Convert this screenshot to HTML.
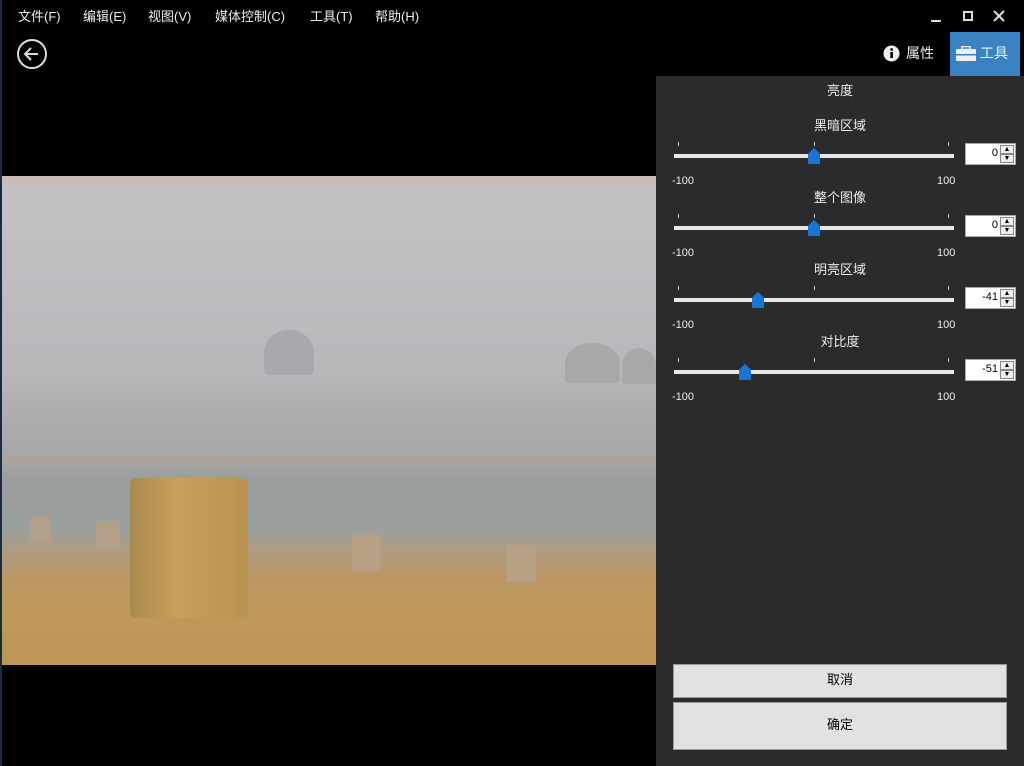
<!DOCTYPE html>
<html><head><meta charset="utf-8"><style>
*{margin:0;padding:0;box-sizing:border-box}
body{width:1024px;height:766px;background:#000;position:relative;overflow:hidden;font-family:"Liberation Sans","Noto Sans CJK SC",sans-serif;color:#fff;font-size:13px}
.a{position:absolute}
.menu span{position:absolute;top:6px;font-size:13px;color:#eee}
.panel{left:656px;top:76px;width:368px;height:690px;background:#2b2a2c}
.t{position:absolute;width:368px;text-align:center;font-size:13px;color:#eee}
.track{position:absolute;left:18px;width:280px;height:4px;background:#e8e8e8}
.tick{position:absolute;width:1px;height:4px;background:#ccc}
.thumb{position:absolute;width:12px;height:16px;background:#1a74d2;clip-path:polygon(50% 0,100% 35%,100% 100%,0 100%,0 35%)}
.num{position:absolute;font-size:11px;color:#eee}
.box{position:absolute;left:309px;width:51px;height:22px;background:#fff;border:1px solid #aaa;color:#000;font-size:11px}
.box b{position:absolute;right:17px;top:3px;font-weight:normal}
.box i{position:absolute;right:1px;width:14px;height:9px;border:1px solid #888;background:#eee;font-style:normal;font-size:7px;text-align:center;line-height:8px}
.btn{position:absolute;left:17px;width:334px;background:#e2e1e3;border:1px solid #999;color:#000;text-align:center;font-size:13px}
</style></head><body>
<div class="a" style="left:0;top:0;width:2px;height:766px;background:#1d2a3a"></div>
<div class="menu">
<span style="left:18px">文件(F)</span><span style="left:83px">编辑(E)</span><span style="left:148px">视图(V)</span><span style="left:215px">媒体控制(C)</span><span style="left:310px">工具(T)</span><span style="left:375px">帮助(H)</span>
</div>
<div class="a" style="left:931px;top:20px;width:10px;height:2px;background:#ddd"></div>
<div class="a" style="left:963px;top:11px;width:10px;height:10px;border:2px solid #ddd"></div>
<svg class="a" style="left:993px;top:10px" width="12" height="12"><path d="M1 1L11 11M11 1L1 11" stroke="#ddd" stroke-width="2"/></svg>
<svg class="a" style="left:16px;top:38px" width="32" height="32"><circle cx="16" cy="16" r="14" fill="none" stroke="#ddd" stroke-width="2"/><path d="M22 16H10M15 10l-6 6 6 6" fill="none" stroke="#ddd" stroke-width="2"/></svg>
<svg class="a" style="left:883px;top:45px" width="17" height="17"><circle cx="8.5" cy="8.5" r="8" fill="#eee"/><rect x="7.3" y="7" width="2.6" height="6" fill="#000"/><circle cx="8.6" cy="4.5" r="1.4" fill="#000"/></svg>
<div class="a" style="left:906px;top:43px;font-size:14px;color:#eee">属性</div>
<div class="a" style="left:950px;top:32px;width:70px;height:44px;background:#3a82c1"></div>
<svg class="a" style="left:956px;top:46px" width="20" height="15"><rect x="6" y="0.5" width="8" height="3" fill="none" stroke="#eee" stroke-width="1.5"/><rect x="0" y="3" width="20" height="12" rx="1" fill="#eee"/><rect x="0" y="8" width="20" height="1.5" fill="#3a82c1"/></svg>
<div class="a" style="left:980px;top:43px;font-size:14px;color:#eee">工具</div>

<div class="a" style="left:2px;top:176px;width:654px;height:489px;background:linear-gradient(180deg,#cbbbb4 0%,#c4c1c4 3%,#bfbdc0 20%,#b9b7ba 40%,#acabae 50%,#a7a7aa 57%,#a8a6a4 58%,#9b9d9f 62%,#9aa09e 72%,#ad9c86 76%,#bb9766 82%,#c09858 90%,#bd9655 100%)"></div>
<div class="a" style="left:2px;top:457px;width:654px;height:5px;background:#b0a48f;opacity:.6"></div>
<div class="a" style="left:130px;top:478px;width:118px;height:140px;border-radius:6px;background:linear-gradient(90deg,#a98b4e,#c99f5b 40%,#b89350);"></div>
<div class="a" style="left:352px;top:535px;width:28px;height:36px;background:#b7a083"></div>
<div class="a" style="left:507px;top:545px;width:29px;height:37px;background:#b7a083"></div>
<div class="a" style="left:96px;top:521px;width:24px;height:28px;background:#b2a088"></div>
<div class="a" style="left:30px;top:517px;width:20px;height:24px;background:#b2a088"></div>
<div class="a" style="left:264px;top:330px;width:50px;height:45px;border-radius:50% 50% 10% 10%;background:#a9a8ac"></div>
<div class="a" style="left:565px;top:343px;width:55px;height:40px;border-radius:50% 50% 10% 10%;background:#a8a8ab"></div>
<div class="a" style="left:622px;top:348px;width:34px;height:36px;border-radius:50% 50% 10% 10%;background:#a9a9ac"></div>

<div class="a panel">
<div class="t" style="top:4px">亮度</div>

<div class="t" style="top:39px">黑暗区域</div>
<div class="tick" style="left:22px;top:66px"></div><div class="tick" style="left:158px;top:66px"></div><div class="tick" style="left:292px;top:66px"></div>
<div class="track" style="top:78px"></div><div class="thumb" style="left:152px;top:72px"></div>
<div class="num" style="left:16px;top:99px">-100</div><div class="num" style="left:281px;top:99px">100</div>
<div class="box" style="top:67px"><b>0</b><i style="top:1px">▲</i><i style="top:10px">▼</i></div>

<div class="t" style="top:111px">整个图像</div>
<div class="tick" style="left:22px;top:138px"></div><div class="tick" style="left:158px;top:138px"></div><div class="tick" style="left:292px;top:138px"></div>
<div class="track" style="top:150px"></div><div class="thumb" style="left:152px;top:144px"></div>
<div class="num" style="left:16px;top:171px">-100</div><div class="num" style="left:281px;top:171px">100</div>
<div class="box" style="top:139px"><b>0</b><i style="top:1px">▲</i><i style="top:10px">▼</i></div>

<div class="t" style="top:183px">明亮区域</div>
<div class="tick" style="left:22px;top:210px"></div><div class="tick" style="left:158px;top:210px"></div><div class="tick" style="left:292px;top:210px"></div>
<div class="track" style="top:222px"></div><div class="thumb" style="left:96px;top:216px"></div>
<div class="num" style="left:16px;top:243px">-100</div><div class="num" style="left:281px;top:243px">100</div>
<div class="box" style="top:211px"><b>-41</b><i style="top:1px">▲</i><i style="top:10px">▼</i></div>

<div class="t" style="top:255px">对比度</div>
<div class="tick" style="left:22px;top:282px"></div><div class="tick" style="left:158px;top:282px"></div><div class="tick" style="left:292px;top:282px"></div>
<div class="track" style="top:294px"></div><div class="thumb" style="left:83px;top:288px"></div>
<div class="num" style="left:16px;top:315px">-100</div><div class="num" style="left:281px;top:315px">100</div>
<div class="box" style="top:283px"><b>-51</b><i style="top:1px">▲</i><i style="top:10px">▼</i></div>

<div class="btn" style="top:588px;height:34px;line-height:30px">取消</div>
<div class="btn" style="top:626px;height:48px;line-height:44px">确定</div>
</div>
</body></html>
